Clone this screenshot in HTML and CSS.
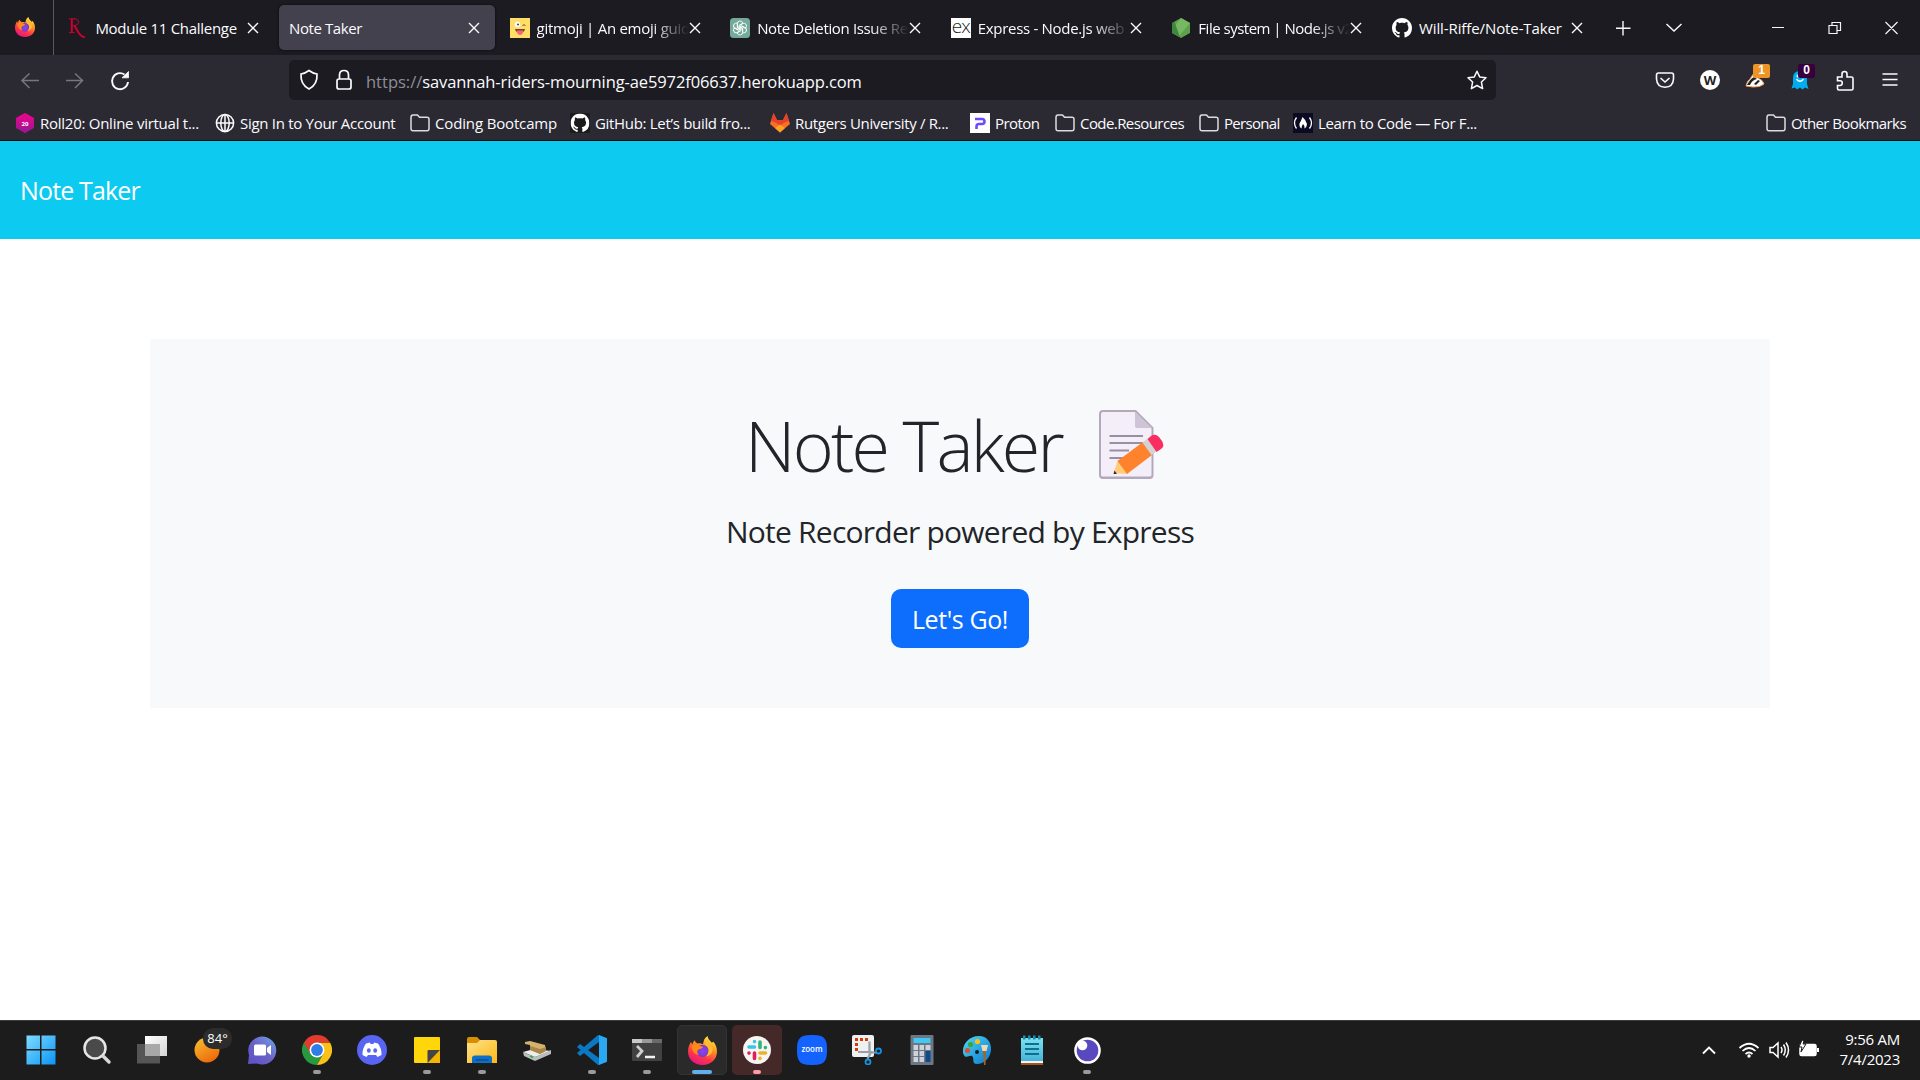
FILE: index.html
```html
<!DOCTYPE html>
<html lang="en">
<head>
<meta charset="utf-8">
<title>Note Taker</title>
<link rel="stylesheet" href="styles.css">
</head>
<body>
<svg class="defs" aria-hidden="true">
  <defs>
    <linearGradient id="g-fire" x1="0.8" y1="0" x2="0.3" y2="1"><stop offset="0" stop-color="#fff44f"/><stop offset=".35" stop-color="#ff9a20"/><stop offset=".7" stop-color="#ff3647"/><stop offset="1" stop-color="#e31587"/></linearGradient>
    <radialGradient id="g-orb"><stop offset="0" stop-color="#7a4bf0"/><stop offset="1" stop-color="#8a35c8"/></radialGradient>
    <linearGradient id="g-win" x1="0" y1="0" x2="1" y2="1"><stop offset="0" stop-color="#7fdcff"/><stop offset="1" stop-color="#0a95f5"/></linearGradient>
    <linearGradient id="g-sun" x1="0" y1="0" x2="0.6" y2="1"><stop offset="0" stop-color="#f7c331"/><stop offset="1" stop-color="#ee6a0c"/></linearGradient>
    <linearGradient id="g-chat" x1="1" y1="0" x2="0" y2="1"><stop offset="0" stop-color="#6fa8ea"/><stop offset=".5" stop-color="#6b62c6"/><stop offset="1" stop-color="#5b50c8"/></linearGradient>
    <linearGradient id="g-view" x1="0" y1="0" x2="1" y2="1"><stop offset="0" stop-color="#fff"/><stop offset="1" stop-color="#d4d4d4"/></linearGradient>
    <linearGradient id="g-folder" x1="0" y1="0" x2="1" y2="1"><stop offset="0" stop-color="#ffe28a"/><stop offset="1" stop-color="#fbb917"/></linearGradient>
    <linearGradient id="g-paint" x1="0" y1="0" x2="1" y2="1"><stop offset="0" stop-color="#4fd8f5"/><stop offset="1" stop-color="#0b78cf"/></linearGradient>
    <linearGradient id="g-pad" x1="0" y1="0" x2="0" y2="1"><stop offset="0" stop-color="#7fe0f2"/><stop offset="1" stop-color="#45b3d8"/></linearGradient>
    <linearGradient id="g-d20" x1="0" y1="0" x2="0" y2="1"><stop offset="0" stop-color="#ff0090"/><stop offset="1" stop-color="#8a1a9c"/></linearGradient>
    <symbol id="firefox" viewBox="0 0 28 28">
      <path fill="url(#g-fire)" d="M14 28C6 28 0 22.500 0 15C0 11 1.500 8 3 5.500C3.300 7 3.700 7.500 4.200 8C5 5.500 5.500 4.800 6.500 4C6.700 5.500 8 6.500 9.500 7.200C12 6.500 13 7.500 14.500 8C15 4.500 16 1.500 19 0C19 3 21.500 4.500 23 6.500L24.500 5.500C27 8.500 28 11.500 28 15C28 22.500 22 28 14 28Z"/>
      <circle cx="14" cy="14.500" r="6" fill="url(#g-orb)"/>
      <path fill="#ff8a16" d="M3.500 10C6 7.500 10 8 11 9.500L14.500 10.500C13.500 12.500 11 12 9.500 13.500C8.500 15 9 17 10.500 18.500C6.500 18 4 15 3.500 10Z"/>
      <path fill="#ffbd2e" d="M17 9C21 11 20.500 17 17.500 19.500C22 19 24.500 15.500 23.500 11C22 8.500 19.500 6 18.500 3C16.500 5.500 16 7 17 9Z"/>
    </symbol>
    <symbol id="close" viewBox="0 0 12 12"><path d="M1 1L11 11M11 1L1 11" fill="none" stroke="currentColor" stroke-width="1.4"/></symbol>
    <symbol id="folder" viewBox="0 0 20 18"><path d="M1 3.500Q1 1 3 1H7.500L9.500 3.200H17Q19 3.200 19 5.200V14.500Q19 16.800 17 16.800H3Q1 16.800 1 14.500Z" fill="none" stroke="#dcdce0" stroke-width="1.500"/></symbol>
    <symbol id="github" viewBox="0 0 16 16"><path fill="#fff" d="M8 0C3.580 0 0 3.580 0 8c0 3.540 2.290 6.530 5.470 7.590.4.070.55-.17.55-.38 0-.19-.01-.82-.01-1.490-2.010.37-2.530-.49-2.690-.94-.09-.23-.48-.94-.82-1.130-.28-.15-.68-.52-.01-.53.63-.01 1.080.58 1.230.82.72 1.210 1.870.87 2.330.66.070-.52.28-.87.51-1.070-1.780-.2-3.640-.89-3.640-3.950 0-.87.31-1.590.82-2.150-.08-.2-.36-1.020.08-2.120 0 0 .67-.21 2.200.82.64-.18 1.320-.27 2-.27s1.360.09 2 .27c1.530-1.040 2.200-.82 2.200-.82.44 1.100.16 1.920.08 2.120.51.56.82 1.270.82 2.150 0 3.070-1.870 3.750-3.650 3.950.29.25.54.73.54 1.480 0 1.070-.01 1.930-.01 2.200 0 .21.15.46.55.38A8.010 8.010 0 0 0 16 8c0-4.420-3.580-8-8-8z"/></symbol>
  </defs>
</svg>

<header class="browser">
  <div class="tabs">
    <div class="pin"><svg width="20" height="20"><use href="#firefox"/></svg></div>
    <div class="tab module"><span class="fav"><svg width="20" height="20" viewBox="0 0 20 20"><g fill="none" stroke="#cc0033"><path stroke-width="1" d="M1 .8H7M1 14.500H6.500M6 .8Q11 1 10.500 4.500Q10 7.500 5 7.600"/><path stroke-width="2" d="M3.800 1V14.500M6.500 7.800L10.500 14.500Q13 19 17 19.300"/></g></svg></span><span class="label">Module 11 Challenge</span><svg class="x" width="12" height="12"><use href="#close"/></svg></div>
    <div class="tab active"><span class="label">Note Taker</span><svg class="x" width="12" height="12"><use href="#close"/></svg></div>
    <div class="tab gitmoji"><span class="fav"><svg width="20" height="20" viewBox="0 0 20 20"><path fill="#ffdd67" d="M0 0H20V20H0Z"/><circle cx="7.500" cy="6.500" r="2.800" fill="#fff"/><circle cx="8" cy="6.500" r="1.100" fill="#555"/><path d="M12.500 7.500Q14 6 15.500 7.500" stroke="#664e27" fill="none"/><path fill="#664e27" d="M5 11H15Q14.500 14.500 10 14.500Q5.500 14.500 5 11Z"/><path fill="#ff5f7a" d="M7 12.500H13V14.500Q12 17 10 17Q8 17 7 14.500Z"/></svg></span><span class="label fade">gitmoji | An emoji guide</span><svg class="x" width="12" height="12"><use href="#close"/></svg></div>
    <div class="tab chat"><span class="fav"><svg width="20" height="20" viewBox="0 0 20 20"><rect width="20" height="20" rx="3.500" fill="#74aa9c"/><g fill="none" stroke="#fff" stroke-width=".9"><path id="petal" d="M7.500 9V5.500Q7.500 3 10 3Q12 3 13 5L9 7.500V11"/><use href="#petal" transform="rotate(60 10 10)"/><use href="#petal" transform="rotate(120 10 10)"/><use href="#petal" transform="rotate(180 10 10)"/><use href="#petal" transform="rotate(240 10 10)"/><use href="#petal" transform="rotate(300 10 10)"/></g></svg></span><span class="label fade">Note Deletion Issue Resolved</span><svg class="x" width="12" height="12"><use href="#close"/></svg></div>
    <div class="tab express"><span class="fav ex">ex</span><span class="label fade">Express - Node.js web app</span><svg class="x" width="12" height="12"><use href="#close"/></svg></div>
    <div class="tab node"><span class="fav"><svg width="20" height="20" viewBox="0 0 20 20"><path fill="#5fa04e" d="M10 0L19 5V15L10 20L1 15V5Z"/><path fill="#77b862" d="M10 0L19 5L8 18L3 9Z"/><path fill="#3f873f" d="M1 5L3.500 4L9 19L1 15Z"/></svg></span><span class="label fade">File system | Node.js v20</span><svg class="x" width="12" height="12"><use href="#close"/></svg></div>
    <div class="tab repo"><span class="fav"><svg width="20" height="20"><use href="#github"/></svg></span><span class="label">Will-Riffe/Note-Taker</span><svg class="x" width="12" height="12"><use href="#close"/></svg></div>
    <svg class="strip-tools" width="80" height="20" viewBox="0 0 80 20" fill="none" stroke="#fbfbfe" stroke-width="1.400"><path d="M9 3V17.500M2 10.300H16.500M52.500 6L60 13L67.500 6"/></svg>
    <svg class="win-tools" width="130" height="20" viewBox="0 0 130 20" fill="none" stroke="#f4f4f6" stroke-width="1.200"><path d="M2 9.500H14M59 7.500H67V15.500H59ZM62 7V4.500H70.500V12.500H67.500M115.500 4L127.500 16M127.500 4L115.500 16"/></svg>
  </div>

  <div class="toolbar">
    <svg class="nav" width="114" height="22" viewBox="0 0 114 22" fill="none" stroke="#77767f" stroke-width="1.500"><path d="M19 11.500H2M9.500 4.500L2 11.500L9.500 19M46 11.500H63M55 4.500L62.500 11.500L55 19"/><g stroke="#fbfbfe" stroke-width="1.900"><path d="M108 13A8 8 0 1 1 104.500 5.500"/><path d="M102 8.800H108.500V2.500Z" fill="#fbfbfe" stroke-width=".8"/></g></svg>
    <div class="url">
      <svg class="url-icons" width="54" height="22" viewBox="0 0 54 22" fill="none" stroke="#fbfbfe" stroke-width="1.700"><path d="M10 1.500Q14 4.500 18 5Q18.700 15.500 10 20Q1.300 15.500 2 5Q6 4.500 10 1.500Z"/><rect x="38" y="10" width="14" height="10" rx="2"/><path d="M40.500 10V6Q40.500 1.500 45 1.500Q49.500 1.500 49.500 6V10"/></svg>
      <span class="addr"><span class="scheme">https://</span><span class="host">savannah-riders-mourning-ae5972f06637.herokuapp.com</span></span>
      <svg class="star" width="20" height="20" viewBox="0 0 20 20" fill="none" stroke="#fbfbfe" stroke-width="1.500" stroke-linejoin="round"><path d="M10 1.200L12.700 6.900L19 7.700L14.400 12L15.600 18.600L10 15.500L4.400 18.600L5.600 12L1 7.700L7.300 6.900Z"/></svg>
    </div>
    <div class="exts">
      <svg width="20" height="20" viewBox="0 0 20 20" fill="none" stroke="#fbfbfe" stroke-width="1.600"><path d="M3.500 3H16.500Q18.500 3 18.500 5V9Q18 17 10 17.300Q2 17 1.500 9V5Q1.500 3 3.500 3Z"/><path d="M5.500 8L10 12L14.500 8"/></svg>
      <span class="w-ext">W</span>
      <span class="badged"><svg width="20" height="20" viewBox="0 0 20 20"><path fill="#fff" stroke="#f0a15a" d="M1 16Q2 11 5 9L9 3L13 8Q18 10 19 14Q15 17.500 8 17Z"/><path fill="#222" d="M2 15Q5 9 9 7L12 9Q7 10 5 15ZM9 14L13 10L15 11Q13 13 11 15Z"/></svg><b class="badge orange">1</b></span>
      <span class="badged"><svg width="20" height="20" viewBox="0 0 20 20"><path fill="#00aef0" d="M3 8Q3 1 10 1Q17 1 17 8V14L18.500 19L15 17.500L12.500 19.500L10 17.500L7 19.500L5 17.500L1.500 18.500L3 14Z"/><path d="M6.500 9Q10 13.500 13.500 9" fill="none" stroke="#fff" stroke-width="1.300"/><circle cx="8" cy="6" r="1.500" fill="#fff"/></svg><b class="badge purple">0</b></span>
      <svg width="20" height="22" viewBox="0 0 20 22" fill="none" stroke="#fbfbfe" stroke-width="1.600"><path d="M2.500 8H7V5Q7 2.500 9.500 2.500Q12 2.500 12 5V8H16.500Q18 8 18 9.500V19.500Q18 21 16.500 21H4Q2.500 21 2.500 19.500V16.500H5Q7.300 16.300 7.300 14Q7.300 11.800 5 11.800H2.500Z"/></svg>
      <svg width="20" height="20" viewBox="0 0 20 20" fill="none" stroke="#fbfbfe" stroke-width="1.500"><path d="M2.500 4H17.500M2.500 9.500H17.500M2.500 15H17.500"/></svg>
    </div>
  </div>

  <nav class="bookmarks">
    <span class="bm roll"><svg width="20" height="20" viewBox="0 0 20 20"><path fill="url(#g-d20)" d="M10 0L19 5V15L10 20L1 15V5Z"/><path d="M10 1L3.500 13.500H16.500ZM1 5L3.500 13.500L10 20L16.500 13.500L19 5" fill="none" stroke="#c0107c" stroke-width=".7"/><text x="10" y="12.500" class="d20">20</text></svg><span>Roll20: Online virtual t...</span></span>
    <span class="bm account"><svg width="20" height="20" viewBox="0 0 20 20" fill="none" stroke="#fbfbfe" stroke-width="1.500"><circle cx="10" cy="10" r="8.600"/><ellipse cx="10" cy="10" rx="4.200" ry="8.600"/><path d="M10 1.500V18.500M1.500 10H18.500"/></svg><span>Sign In to Your Account</span></span>
    <span class="bm bootcamp"><svg width="20" height="18"><use href="#folder"/></svg><span>Coding Bootcamp</span></span>
    <span class="bm hub"><svg class="gh" width="20" height="20" viewBox="-.5 -.5 17 17"><use href="#github" width="16" height="16"/></svg><span>GitHub: Let’s build fro...</span></span>
    <span class="bm rutgers"><svg width="20" height="20" viewBox="0 0 20 20"><path fill="#fc6d26" d="M0 11L3.500 0L7 7H13L16.500 0L20 11L10 19.500Z"/><path fill="#e24329" d="M3.500 0L7 7H13L16.500 0L19 8L13.500 10L10 13L6.500 10L1 8Z"/><path fill="#fca326" d="M5 15L10 11.500L15 15L10 19.500Z"/></svg><span>Rutgers University / R...</span></span>
    <span class="bm proton"><svg width="20" height="20" viewBox="0 0 20 20"><path fill="#fff" d="M0 0H20V20H0Z"/><path d="M5 6H12Q14.500 6 14.500 8.500Q14.500 11 12 11H9Q6.500 11 6.500 13.500V16" fill="none" stroke="#6d4aff" stroke-width="2.600"/></svg><span>Proton</span></span>
    <span class="bm code"><svg width="20" height="18"><use href="#folder"/></svg><span>Code.Resources</span></span>
    <span class="bm personal"><svg width="20" height="18"><use href="#folder"/></svg><span>Personal</span></span>
    <span class="bm learn"><svg width="20" height="20" viewBox="0 0 20 20"><path fill="#0a0a23" d="M0 0H20V20H0Z"/><path d="M3.500 4.500Q-.5 10 3.500 15.500M16.500 4.500Q20.500 10 16.500 15.500" fill="none" stroke="#fff" stroke-width="1.300"/><path fill="#fff" d="M9.500 4Q13 7 14 11Q14 14 11.500 15.500Q12 12.500 10 11Q8.500 13 8.500 15.500Q6 14 6.500 10.500Q8 8 9.500 4Z"/></svg><span>Learn to Code — For F...</span></span>
    <span class="bm other"><svg width="20" height="18"><use href="#folder"/></svg><span>Other Bookmarks</span></span>
  </nav>
</header>

<main class="page">
  <div class="navbar"><a class="brand">Note Taker</a></div>
  <section class="hero">
    <h1><span>Note Taker</span><svg class="memo" width="66" height="70" viewBox="0 0 66 70"><path fill="#f3eef8" stroke="#b4a9bb" stroke-width="2" d="M4 1H36.500L53.500 18V65Q53.500 68 50.500 68H4Q1 68 1 65V4Q1 1 4 1Z"/><path d="M2 67.500H52" stroke="#b4a9bb" stroke-width="2"/><path fill="#cdc4d6" d="M36 1.500L53 18H38Q36 18 36 16Z"/><path d="M10.500 26H44M10.500 33H44M10.500 40.500H30M10.500 48H24" stroke="#998ea4" stroke-width="2"/><path fill="#ffcd7a" d="M14.500 63L19 50L28.500 64Z"/><path fill="#402a32" d="M14.500 64L15.500 60.500L18 64Z"/><path fill="#ff822d" d="M18.500 51L44 32L53 45L28 64Z"/><path fill="#d3d3d3" d="M43.500 32.500L49 28.500L58 41L52.500 45Z"/><path fill="#f92f60" d="M48.500 29L52 26Q56 23 60 27L63 31Q66 36 62 39L57.500 42Z"/></svg></h1>
    <p>Note Recorder powered by Express</p>
    <a class="go">Let's Go!</a>
  </section>
</main>

<footer class="taskbar">
  <div class="apps">
    <span class="app start"><svg width="30" height="30" viewBox="0 0 30 30"><path fill="url(#g-win)" d="M.5.500H14V14H.5ZM15.500.5H29.500V14H15.500ZM.5 15.500H14V29.500H.5ZM15.500 15.500H29.500V29.500H15.500Z"/></svg></span>
    <span class="app"><svg width="30" height="30" viewBox="0 0 30 30"><circle cx="13" cy="13" r="10.500" fill="#4a4a4a" stroke="#e4e6e8" stroke-width="2.500"/><path d="M21.500 21.500L27 27" stroke="#d5d9dc" stroke-width="3.500" stroke-linecap="round"/></svg></span>
    <span class="app"><svg width="30" height="30" viewBox="0 0 30 30"><path fill="url(#g-view)" d="M8 1H30V21H8Z"/><path fill="#555" d="M0 9H23V28.500H0Z"/><path fill="#a8a8a8" d="M8 9H23V21H8Z"/></svg></span>
    <span class="app weather"><svg width="26" height="26" viewBox="0 0 26 26"><circle cx="13" cy="13" r="12.500" fill="url(#g-sun)"/></svg><b>84°</b></span>
    <span class="app"><svg width="30" height="30" viewBox="0 0 30 30"><path fill="url(#g-chat)" d="M1 29L2 20A14 14 0 1 1 10 28.500Z"/><rect x="7" y="9.500" width="12" height="11" rx="1.500" fill="#fff"/><path fill="#fff" d="M20 13L24 10V20L20 17Z"/></svg></span>
    <span class="app run"><svg width="30" height="30" viewBox="0 0 30 30"><path fill="#27993f" d="M2 7.500A15 15 0 0 0 15 30L21.500 18.500L15 15Z"/><path fill="#fbc116" d="M28 7.500A15 15 0 0 1 15 30L21.500 18.500L15 7.500Z"/><path fill="#e33b2e" d="M2 7.500A15 15 0 0 1 28 7.500H15L8.500 18.700Z"/><circle cx="15" cy="15" r="7.500" fill="#fff"/><circle cx="15" cy="15" r="5.900" fill="#2f7de9"/></svg></span>
    <span class="app"><svg width="30" height="30" viewBox="0 0 30 30"><circle cx="15" cy="15" r="15" fill="#5865f2"/><path fill="#fff" d="M9 8.500L13 7.500L13.500 9H16.500L17 7.500L21 8.500Q25 14 24.500 20L20.500 22L19 20H11L9.500 22L5.500 20Q5 14 9 8.500Z"/><ellipse cx="11.800" cy="15.500" rx="1.900" ry="2.200" fill="#5865f2"/><ellipse cx="18.200" cy="15.500" rx="1.900" ry="2.200" fill="#5865f2"/></svg></span>
    <span class="app run"><svg width="30" height="30" viewBox="0 0 30 30"><rect x="2" y="2" width="26" height="26" rx="1" fill="#ffd60a"/><path fill="#f5b400" d="M15 28L28 15V28Z"/><path fill="#444" d="M15.500 16Q15.500 15 16.500 15H28L15.500 28Z"/></svg></span>
    <span class="app run"><svg width="30" height="30" viewBox="0 0 30 30"><path fill="#d99000" d="M0 4Q0 2 2 2H10L13 5V8H0Z"/><path fill="url(#g-folder)" d="M0 8H10L13 5H28Q30 5 30 7V28H0Z"/><path fill="#0f6fc6" d="M5 28V23Q5 20.500 8 20.500H22Q25 20.500 25 23V28Z"/><path d="M9 25H21" stroke="#0b4f94" stroke-width="1.500" stroke-linecap="round"/></svg></span>
    <span class="app"><svg width="30" height="30" viewBox="0 0 30 30"><path fill="#eceeee" d="M1 17L12 14L29 16L13 22Z"/><path fill="#b9bdbd" d="M1 17L13 22V26L2 21ZM13 22L29 15V19L13 26Z"/><path d="M8 21L11 22.500" stroke="#2caf4b" stroke-width="1.500"/><path fill="#d4b26e" d="M3 7L8 6L23 10L24 16L18 19L8 15V10L3 9Z"/><path fill="#a98646" d="M8 11L18 14L24 12V16L18 19L8 15Z"/></svg></span>
    <span class="app run"><svg width="30" height="30" viewBox="0 0 30 30"><path fill="#0b78c4" d="M21 0L30 3V27L21 30L0 12L3 9L22 23V7L3 21L0 18Z"/><path fill="#2aa8f2" d="M22 0L30 3.500V26.500L22 30Z"/></svg></span>
    <span class="app run"><svg width="30" height="30" viewBox="0 0 30 30"><rect y="4" width="30" height="22" rx="1" fill="#414141"/><path fill="#c9c9c9" d="M0 4H10V8H0Z"/><path fill="#999" d="M10 4H20V8H10Z"/><path fill="#6a6a6a" d="M20 4H30V8H20Z"/><path d="M5 11L10 16L5 22" fill="none" stroke="#cfcfcf" stroke-width="2.800"/><path d="M13 22H23" stroke="#f2f2f2" stroke-width="2.500"/></svg></span>
    <span class="app current"><svg width="29" height="29"><use href="#firefox"/></svg></span>
    <span class="app alert"><svg width="28" height="28" viewBox="0 0 28 28"><circle cx="14" cy="14" r="14" fill="#f7f5f2"/><g fill="none" stroke-width="3.600" stroke-linecap="round"><path stroke="#36c5f0" d="M6 11H11.500M11.500 5.500V5.600"/><path stroke="#2eb67d" d="M17 6V11.500M22.400 11.500V11.600"/><path stroke="#ecb22e" d="M17 17H22.500M17 22.400V22.500"/><path stroke="#e01e5a" d="M11.500 17V22.500M6 17V17.100"/></g></svg></span>
    <span class="app"><svg width="30" height="30" viewBox="0 0 30 30"><path fill="#1463ff" d="M15 0C27 0 30 3 30 15C30 27 27 30 15 30C3 30 0 27 0 15C0 3 3 0 15 0Z"/><text x="15" y="17.300" class="zoom">zoom</text></svg></span>
    <span class="app"><svg width="30" height="30" viewBox="0 0 30 30"><rect width="22" height="22" rx="2" fill="#eef0f2"/><path d="M4.500 16V4.500H17" fill="none" stroke="#d83b01" stroke-width="3" stroke-dasharray="3 2"/><path d="M17.500 6.500V17.500H25M6 17H19L15.500 24" fill="none" stroke="#9aa0a6" stroke-width="2.200"/><circle cx="26.500" cy="16" r="2.500" fill="none" stroke="#1490df" stroke-width="1.800"/><circle cx="16" cy="27" r="2.500" fill="none" stroke="#1490df" stroke-width="1.800"/></svg></span>
    <span class="app"><svg width="30" height="30" viewBox="0 0 30 30"><rect x="3.500" width="23" height="30" rx="1" fill="#6d7681"/><path fill="#41c8f4" d="M6.500 3H23.500V8H6.500Z"/><path fill="#ccd3da" d="M6.500 10H11V15H6.500ZM12.500 10H17V15H12.500ZM18.500 10H23.500V15H18.500ZM6.500 16H11V21H6.500ZM12.500 16H17V21H12.500ZM6.500 22H11V27H6.500ZM12.500 22H17V27H12.500Z"/><path fill="#114a8b" d="M18.500 16H23.500V27H18.500Z"/></svg></span>
    <span class="app"><svg width="30" height="30" viewBox="0 0 30 30"><path fill="url(#g-paint)" d="M1 18C0 9 7 1 17 1C25 1 29 7 29 14C29 22 23 29 15 29C9 29 13 23 10 21C7 20 3 25 1 18Z"/><circle cx="8.500" cy="9.500" r="2.600" fill="#3aa63a"/><circle cx="15.500" cy="6.500" r="2.600" fill="#f8c21c"/><circle cx="5.500" cy="15.500" r="2.600" fill="#d9532c"/><circle cx="15" cy="17" r="2" fill="#1c1c1c"/><path fill="#efd9b5" d="M19 10H26L24.500 16H20.500Z"/><path fill="#a5652a" d="M21 16H24L23.500 30H22Z"/></svg></span>
    <span class="app"><svg width="30" height="30" viewBox="0 0 30 30"><path fill="url(#g-pad)" d="M4 3H26V26H4Z"/><path fill="#f5f5f5" d="M4 26H26V28H4Z"/><path fill="#a5551a" d="M4 28H26V30H4Z"/><path d="M8 9H22M8 14H22M8 19H22" stroke="#0c7090" stroke-width="1.800"/><path d="M6 2.500H24" stroke="#1a8db0" stroke-width="4" stroke-dasharray="2.500 2.500"/></svg></span>
    <span class="app run"><svg width="27" height="27" viewBox="0 0 27 27"><circle cx="13.500" cy="13.500" r="13.300" fill="#fff"/><circle cx="13.500" cy="13.500" r="10.800" fill="#5849be"/><circle cx="8.500" cy="8.500" r="4.800" fill="#fff"/></svg></span>
  </div>
  <div class="tray">
    <svg width="118" height="24" viewBox="0 0 118 24" fill="none" stroke="#fff" stroke-width="1.500"><path d="M1 15.500L7 9.500L13 15.500" stroke-width="1.900"/><path d="M37.500 10Q47 1.500 56.500 10M40.500 13Q47 7 53.500 13M43.500 16Q47 13 50.500 16" stroke-width="1.700"/><circle cx="47" cy="18" r="1.700" fill="#fff" stroke="none"/><path d="M68 9.500H71L76 5V19L71 14.500H68ZM79 9Q81 12 79 15M81.500 6.500Q85 12 81.500 17.500M84 4.500Q89 12 84 19.500"/><rect x="98" y="6.500" width="16" height="11" rx="1.500" fill="#fff"/><path d="M116 10V14" stroke-width="2"/><path d="M100 2L97 9H100L99 14L104 6H101L102 3Z" fill="#fff" stroke="#1c1c1c" stroke-width="1"/></svg>
    <div class="clock"><span>9:56 AM</span><span>7/4/2023</span></div>
  </div>
</footer>
</body>
</html>
```
FILE: styles.css
```css
* { box-sizing: border-box; }
body { margin: 0; width: 1920px; height: 1080px; overflow: hidden; display: flex; flex-direction: column; font-family: "Open Sans", "Noto Sans", sans-serif; font-size: 15px; background: #fff; color: #212529; }
svg { display: block; flex: none; }
.defs { position: absolute; width: 0; height: 0; }
.browser { height: 141px; background: #2b2a33; color: #fbfbfe; border-bottom: 1px solid #0c0c0d; flex: none; }

.tabs { height: 55px; background: #1c1b22; display: flex; align-items: center; }
.pin { width: 54px; height: 55px; flex: none; border-right: 1px solid #5a5961; padding: 17px 0 0 15px; margin-right: 4.400px; }
.tab { width: 215.600px; height: 45px; margin-right: 5px; padding: 0 14.500px 0 10px; display: flex; align-items: center; flex: none; border-radius: 5px; }
.tab.active { background: #42414d; box-shadow: 0 0 3px #0a0a0c; letter-spacing: -.4px; }
.module { letter-spacing: -.28px; }
.gitmoji { letter-spacing: -.27px; }
.chat { letter-spacing: -.36px; }
.express { letter-spacing: -.3px; }
.node { letter-spacing: -.5px; }
.repo { letter-spacing: -.1px; }
.fav { width: 20px; height: 20px; margin-right: 7px; flex: none; }
.ex { background: #fff; color: #222; font: 300 19px/16px "Open Sans", sans-serif; letter-spacing: -1px; text-align: center; }
.label { flex: 1; white-space: nowrap; overflow: hidden; line-height: 24px; padding-top: 1px; }
.fade { -webkit-mask-image: linear-gradient(to right, #000 calc(100% - 38px), transparent); mask-image: linear-gradient(to right, #000 calc(100% - 38px), transparent); }
.strip-tools { margin-left: 11px; }
.win-tools { margin-left: auto; margin-right: 20px; }

.toolbar { height: 50px; display: flex; align-items: center; }
.nav { margin-left: 20px; }
.url { margin-left: 155px; width: 1207px; height: 40px; border-radius: 5px; background: #1c1b22; display: flex; align-items: center; padding: 0 9px 0 10px; }
.url-icons { margin-right: 13px; }
.addr { font-size: 16.500px; line-height: 24px; padding-top: 3px; white-space: nowrap; }
.scheme { color: #8f8e96; }
.host { letter-spacing: -.11px; }
.star { margin-left: auto; }
.exts { margin-left: auto; margin-right: 20px; display: flex; align-items: center; gap: 25px; }
.w-ext { width: 20px; height: 20px; border-radius: 50%; background: #fff; color: #222; font: 700 13px/20px "Open Sans", sans-serif; text-align: center; }
.badged { position: relative; }
.badge { position: absolute; left: 8px; top: -6px; width: 17px; height: 14px; border-radius: 2px; font: 700 12px/13px "Liberation Sans", sans-serif; text-align: center; color: #fff; }
.orange { background: #ee9426; }
.purple { background: #37003c; }

.bookmarks { height: 35px; display: flex; align-items: center; padding: 1px 14px 0 15px; }
.bm { display: flex; align-items: center; flex: none; white-space: nowrap; line-height: 24px; }
.bm svg { margin-right: 5px; }
.roll { width: 200px; letter-spacing: -.26px; }
.account { width: 195px; letter-spacing: -.29px; }
.bootcamp { width: 160px; letter-spacing: -.15px; }
.hub { width: 200px; letter-spacing: -.31px; }
.rutgers { width: 200px; letter-spacing: -.33px; }
.proton { width: 85px; letter-spacing: -.55px; }
.code { width: 144px; letter-spacing: -.57px; }
.personal { width: 94px; letter-spacing: -.7px; }
.learn { letter-spacing: -.35px; }
.gh { background: #1b1a1d; }
.d20 { font: 700 6px "Open Sans", sans-serif; fill: #fff; text-anchor: middle; letter-spacing: 0; }
.other { margin-left: auto; letter-spacing: -.58px; }

.page { flex: 1; }
.navbar { height: 98px; background: #0dcaf0; color: #fff; padding: 31px 20px; font-size: 25px; line-height: 36px; letter-spacing: -.85px; }
.hero { margin: 100px 150px 0; height: 369px; background: #f8f9fa; display: flex; flex-direction: column; align-items: center; padding-top: 58px; }
h1 { margin: 0; height: 96px; padding-right: 10px; font-size: 70px; line-height: 96px; font-weight: 300; letter-spacing: -2.800px; display: flex; align-items: center; gap: 37px; }
.hero p { margin: 16px 0 0; font-size: 30px; line-height: 45px; letter-spacing: -.77px; }
.go { margin-top: 35px; width: 138px; height: 59px; border-radius: 10px; background: #0d6efd; color: #fff; font-size: 25px; line-height: 60px; letter-spacing: -.4px; text-align: center; }

.taskbar { height: 60px; flex: none; background: #1c1c1c; border-top: 1px solid #3c3c3e; display: flex; align-items: center; justify-content: space-between; color: #fff; }
.apps { display: flex; gap: 5px; margin-left: 17px; padding-bottom: 1px; }
.app { position: relative; width: 50px; height: 50px; border-radius: 5px; display: flex; align-items: center; justify-content: center; }
.start { padding-right: 3px; }
.run::after, .current::after, .alert::after { content: ""; position: absolute; bottom: 1px; left: 21px; width: 8px; height: 4px; border-radius: 2px; background: #9a9a9a; }
.current { background: #2a2a2a; border: 1px solid #333; }
.current::after { width: 20px; left: 14px; bottom: 0; background: #60b0f0; }
.alert { background: #452828; }
.alert::after { background: #ff99a4; }
.weather b { position: absolute; left: 21px; top: 3px; width: 29px; height: 21px; border-radius: 10px; background: #2c2c2c; font-weight: 400; font-size: 13px; line-height: 20px; text-align: center; }
.zoom { font: 600 8px "Open Sans", sans-serif; fill: #fff; text-anchor: middle; }
.tray { display: flex; align-items: center; margin-right: 20px; padding-bottom: 1px; }
.clock { display: flex; flex-direction: column; align-items: flex-end; width: 80px; line-height: 20px; padding-bottom: 3px; letter-spacing: -.25px; }
```
